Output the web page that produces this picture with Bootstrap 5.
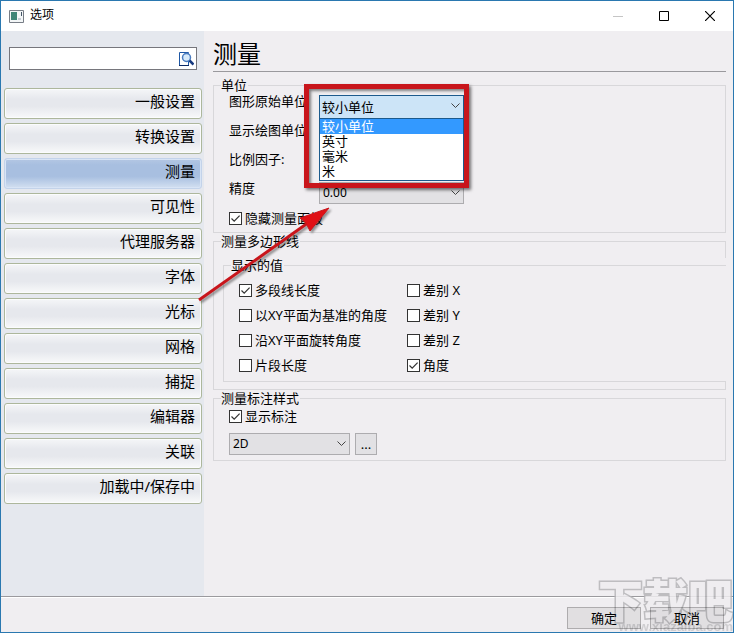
<!DOCTYPE html>
<html lang="zh-CN">
<head>
<meta charset="utf-8">
<meta name="viewport" content="width=device-width, initial-scale=1">
<title>选项</title>
<link href="https://cdn.jsdelivr.net/npm/bootstrap@5.3.0/dist/css/bootstrap.min.css" rel="stylesheet">
<style>
body { font-family: "Noto Sans", "Noto Sans CJK SC", sans-serif; font-size: 13px; line-height: 15px; color: #000; background: #f0eef1; }
.window { border: 1px solid #2a78b0; overflow: hidden; }
.titlebar { height: 30px; background: #fff; font-size: 12px; line-height: 16px; padding-left: 8px; }
.titlebar span { padding: 0 0 2px 6px; }
.titlebar button { width: 46px; height: 28px; border: 0; background: none; padding: 0; display: flex; align-items: center; justify-content: center; }
.sidebar { width: 203px; background: #e5e8ee; padding: 16px 2px 0 3px; }
.search { height: 23px; border: 1px solid #76767c; background: #fff; margin: 0 5px 18px 5px; padding-right: 2px; }
.search input { border: 0; outline: 0; background: none; min-width: 0; font-size: 13px; }
.search button { border: 0; background: none; padding: 0; display: flex; }
.side-tab { height: 31px; border: 1px solid #adb79c; border-radius: 3px; color: #000; text-decoration: none; font-size: 15px; line-height: 20px; padding: 2px 6px 0; text-align: right; background: linear-gradient(#f5f6f8, #e6e8ed 35%, #e6e8ed 60%, #f8f9fa); box-shadow: inset 0 0 0 1px #fbfcfd; }
.side-tab.current { border-color: #c3d3ea; background: linear-gradient(#b4c7e3, #a8bfe0 20%, #a8bfe0 60%, #d3e0f1); box-shadow: inset 0 0 0 1px #d8e4f5; }
.pane { padding: 8px 7px 0 9px; }
.pane-title { font-size: 24px; line-height: 30px; font-weight: 400; margin: 0 0 6px; border-bottom: 1px solid #9a999d; padding-bottom: 2px; }
fieldset { border: 1px solid #d8d7da; padding: 0 8px 0 15px; }
legend { float: none; width: auto; font-size: 13px; line-height: 15px; margin: 0 0 0 -8px; padding: 0 1px 0 0; }
.unit-row { height: 29px; }
.unit-row > label { width: 90px; white-space: nowrap; padding-top: 1px; }
.combo { height: 22px; border: 1px solid #adacaf; border-radius: 0; background: #e2e1e4; padding: 0 2px; font-size: 13px; line-height: 20px; color: #000; appearance: none; width: 100%; }
.combo.latin { font-size: 12px; padding: 0 3px; }
.combo-box { position: relative; width: 145px; height: 22px; margin-top: 2px; }
.combo-box > svg { position: absolute; right: 4px; top: 8px; pointer-events: none; }
.combo-box.open .combo { background: #cce4f7; border-color: #1c5a8c; height: 24px; }
.combo-box.wide { width: 121px; margin: 0; }
.choices { position: absolute; z-index: 2; left: 0; right: 0; top: 23px; border: 1px solid #1c5a8c; background: #fff; margin: 0; padding: 0 0 1px; list-style: none; }
.choices li { padding: 0 2px; line-height: 15px; }
.choices .chosen { background: #3399ff; color: #fff; }
.tick { appearance: none; width: 13px; height: 13px; border: 1px solid #333; background: #fff; margin: 0; flex: none; }
.tick:checked { background: #fff url("data:image/svg+xml,%3Csvg xmlns='http://www.w3.org/2000/svg' viewBox='0 0 11 11'%3E%3Cpath d='M1.5 5.5 4.2 8.2 9.6 2.6' fill='none' stroke='%23333' stroke-width='1.2'/%3E%3C/svg%3E"); }
.tick-row { height: 25px; gap: 3px; white-space: nowrap; }
.hide-row { margin: -3px 0 1px; }
.units { margin-bottom: 1px; }
.values-box { background: #f0eef1; margin: 9px -9px 7px -6px; }
.values-box fieldset { border-right: 0; }
.values-grid { padding: 5px 0 3px; }
.label-style { margin-top: 1px; }
.dim-row { height: 20px; }
.dim-style { padding: 7px 0 5px; gap: 5px; }
.dim-style .btn-flat { width: 22px; }
.col-first { width: 168px; }
.btn-flat { border: 1px solid #adacaf; background: #e2e1e4; height: 22px; padding: 0; font-size: 13px; line-height: 18px; color: #000; }
.footer-bar { border-top: 1px solid #9b9a9e; box-shadow: inset 0 1px #fff; padding: 10px 9px 3px 0; gap: 9px; }
.footer-bar .btn-flat { width: 74px; position: relative; z-index: 4; background: #00000010; border-color: #0000003a; }
.callout-box { position: absolute; z-index: 3; left: 75px; top: -9px; width: 165px; height: 104px; border: 5px solid #c8151b; box-shadow: 2px 2px 3px #0008, inset 2px 2px 3px #0007; pointer-events: none; }
.arrow { position: absolute; z-index: 4; left: 193px; top: 200px; pointer-events: none; filter: drop-shadow(2px 2px 1px #0006); }
.stamp { position: absolute; right: 0; bottom: 0; z-index: 3; pointer-events: none; color: #efedf0; text-align: right; -webkit-text-stroke: 3px #b6b5b8; paint-order: stroke fill; font-family: "Noto Sans CJK SC", sans-serif; font-weight: 900; white-space: nowrap; opacity: .85; }
.stamp b { display: block; font-size: 45px; line-height: 46px; }
.stamp small { display: block; font: bold 13px/10px "Liberation Sans", sans-serif; color: #c9c8cb; -webkit-text-stroke: 0; }
</style>
</head>
<body>
<div class="window min-vh-100 d-flex flex-column position-relative">
  <header class="titlebar d-flex align-items-center">
    <svg width="15" height="13" viewBox="0 0 15 13"><path d="M.5.5h14v12H.5z" fill="#f3f6f7" stroke="#777d86"/><path d="M2 2h6v8H2z" fill="#3f8577"/><path d="M9 8h3v2H9z" fill="#c6ccd4"/><path d="M12.500 2v4" stroke="#456"/></svg>
    <span class="me-auto">选项</span>
    <button aria-label="最小化"><svg width="10" height="10"><path d="M0 5.500h10" stroke="#c5c5c5"/></svg></button>
    <button aria-label="最大化"><svg width="10" height="10"><path d="M.5.5h9v9h-9z" fill="none" stroke="#000"/></svg></button>
    <button aria-label="关闭"><svg width="10" height="10"><path d="M0 0 10 10M10 0 0 10" stroke="#000" stroke-width="1.200"/></svg></button>
  </header>
  <div class="d-flex flex-grow-1">
    <nav class="sidebar flex-shrink-0 d-flex flex-column">
      <div class="search d-flex align-items-center">
        <input class="flex-grow-1" type="text" aria-label="搜索">
        <button aria-label="查找"><svg width="16" height="16" viewBox="0 0 16 16"><path d="M1.500 1.500h9v13h-9z" fill="#fff" stroke="#1e57a4"/><path d="M1 14.500h10" stroke="#0b2a66"/><circle cx="8.500" cy="6.500" r="4" fill="#d7eafa" stroke="#4a7cc0" stroke-width="1.500"/><path d="m11.500 9.500 4 4" stroke="#173a80" stroke-width="2.500"/></svg></button>
      </div>
      <div class="d-flex flex-column gap-1">
        <a class="side-tab" href="#">一般设置</a>
        <a class="side-tab" href="#">转换设置</a>
        <a class="side-tab current" href="#" aria-current="page">测量</a>
        <a class="side-tab" href="#">可见性</a>
        <a class="side-tab" href="#">代理服务器</a>
        <a class="side-tab" href="#">字体</a>
        <a class="side-tab" href="#">光标</a>
        <a class="side-tab" href="#">网格</a>
        <a class="side-tab" href="#">捕捉</a>
        <a class="side-tab" href="#">编辑器</a>
        <a class="side-tab" href="#">关联</a>
        <a class="side-tab" href="#">加载中/保存中</a>
      </div>
    </nav>
    <main class="pane flex-grow-1">
      <h1 class="pane-title">测量</h1>
      <fieldset class="units">
        <legend>单位</legend>
        <div class="position-relative">
          <div class="unit-row d-flex">
            <label for="source-unit">图形原始单位</label>
            <div class="combo-box open">
              <select class="combo" id="source-unit"><option>较小单位</option></select>
              <svg width="9" height="6"><path d="M.5.5l4 4 4-4" fill="none" stroke="#444"/></svg>
              <ul class="choices" role="listbox" aria-label="图形原始单位">
                <li class="chosen" role="option" aria-selected="true">较小单位</li>
                <li role="option">英寸</li>
                <li role="option">毫米</li>
                <li role="option">米</li>
              </ul>
            </div>
          </div>
          <div class="unit-row d-flex">
            <label for="draw-unit">显示绘图单位</label>
            <div class="combo-box"><select class="combo" id="draw-unit"></select></div>
          </div>
          <div class="unit-row d-flex">
            <label for="scale">比例因子:</label>
            <div class="combo-box"><input class="combo" id="scale" type="text"></div>
          </div>
          <div class="unit-row d-flex">
            <label for="precision">精度</label>
            <div class="combo-box">
              <select class="combo latin" id="precision"><option>0.00</option></select>
              <svg width="9" height="6"><path d="M.5.5l4 4 4-4" fill="none" stroke="#444"/></svg>
            </div>
          </div>
          <div class="callout-box"></div>
        </div>
        <div class="tick-row hide-row d-flex align-items-center">
          <input class="tick" type="checkbox" id="hide-panel" checked><label for="hide-panel">隐藏测量面板</label>
        </div>
      </fieldset>
      <fieldset>
        <legend>测量多边形线</legend>
        <div class="values-box">
          <fieldset>
            <legend>显示的值</legend>
            <div class="values-grid d-flex">
              <div class="col-first">
                <div class="tick-row d-flex align-items-center"><input class="tick" type="checkbox" id="v1" checked><label for="v1">多段线长度</label></div>
                <div class="tick-row d-flex align-items-center"><input class="tick" type="checkbox" id="v2"><label for="v2">以XY平面为基准的角度</label></div>
                <div class="tick-row d-flex align-items-center"><input class="tick" type="checkbox" id="v3"><label for="v3">沿XY平面旋转角度</label></div>
                <div class="tick-row d-flex align-items-center"><input class="tick" type="checkbox" id="v4"><label for="v4">片段长度</label></div>
              </div>
              <div>
                <div class="tick-row d-flex align-items-center"><input class="tick" type="checkbox" id="v5"><label for="v5">差别 X</label></div>
                <div class="tick-row d-flex align-items-center"><input class="tick" type="checkbox" id="v6"><label for="v6">差别 Y</label></div>
                <div class="tick-row d-flex align-items-center"><input class="tick" type="checkbox" id="v7"><label for="v7">差别 Z</label></div>
                <div class="tick-row d-flex align-items-center"><input class="tick" type="checkbox" id="v8" checked><label for="v8">角度</label></div>
              </div>
            </div>
          </fieldset>
        </div>
      </fieldset>
      <fieldset class="label-style">
        <legend>测量标注样式</legend>
        <div class="tick-row dim-row d-flex align-items-center">
          <input class="tick" type="checkbox" id="show-dim" checked><label for="show-dim">显示标注</label>
        </div>
        <div class="dim-style d-flex">
          <div class="combo-box wide">
            <select class="combo latin" aria-label="标注样式"><option>2D</option></select>
            <svg width="9" height="6"><path d="M.5.5l4 4 4-4" fill="none" stroke="#444"/></svg>
          </div>
          <button class="btn-flat" aria-label="更多">...</button>
        </div>
      </fieldset>
    </main>
  </div>
  <footer class="footer-bar d-flex justify-content-end">
    <button class="btn-flat">确定</button>
    <button class="btn-flat">取消</button>
  </footer>
  <svg class="arrow" width="145" height="110" viewBox="0 0 145 110"><path d="M5 99 118 19" stroke="#c8151b" stroke-width="3"/><path d="M135 7 106 17 112 22 116 30z" fill="#e01015" stroke="#c8151b"/></svg>
  <div class="stamp" aria-hidden="true"><b>下载吧</b><small>www.xiazaiba.com</small></div>
</div>
<script src="https://cdn.jsdelivr.net/npm/bootstrap@5.3.0/dist/js/bootstrap.bundle.min.js"></script>
</body>
</html>
